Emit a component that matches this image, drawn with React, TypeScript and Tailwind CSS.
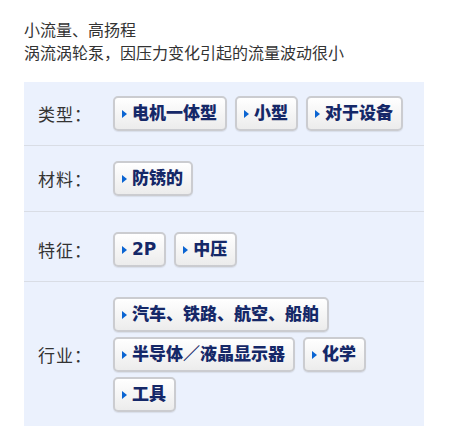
const rows = [
  {
    label: "类型：",
    pad: "pt-[14px] pb-[14px]",
    tags: ["电机一体型", "小型", "对于设备"],
  },
  { label: "材料：", pad: "pt-[15px] pb-[15px]", tags: ["防锈的"] },
  { label: "特征：", pad: "pt-[20px] pb-[14px]", tags: ["2P", "中压"] },
  {
    label: "行业：",
    pad: "pt-[15px] pb-[14px]",
    tags: ["汽车、铁路、航空、船舶", "半导体／液晶显示器", "化学", "工具"],
  },
]

function Tag({ children }: { children: string }) {
  return (
    <a
      href="#"
      className="flex h-[35px] items-center gap-[5px] rounded-[5px] border-2 border-[#cbccd0] bg-gradient-to-b from-white to-[#ececec] pl-[7px] pr-[8px] text-[17px] font-black text-[#152868] shadow-[0_1px_1px_rgba(0,0,0,0.08)] [font-family:'DejaVu_Sans','Noto_Sans_CJK_SC',sans-serif]"
    >
      <span className="h-0 w-0 border-y-[4.5px] border-l-[5px] border-y-transparent border-l-[#0a64d2]" />
      {children}
    </a>
  )
}

export default function App() {
  return (
    <div className="min-h-[438px] bg-white px-6 pt-[18px] text-[#333] [font-family:'Noto_Sans_CJK_SC',sans-serif]">
      <div className="text-[16px] leading-[23px]">
        <p>小流量、高扬程</p>
        <p>涡流涡轮泵，因压力变化引起的流量波动很小</p>
      </div>

      <div className="mt-[18px] w-[400px] bg-[#ebf1fd]">
        {rows.map((row, i) => (
          <div
            key={row.label}
            className={`flex items-center ${row.pad} ${
              i < rows.length - 1 ? "border-b border-[#d9dde5]" : ""
            }`}
          >
            <div className="w-[89px] shrink-0 pl-[14px] text-[17px] tracking-[1px]">
              {row.label}
            </div>
            <div className="flex flex-wrap gap-x-2 gap-y-[5px] pr-[14px]">
              {row.tags.map((tag) => (
                <Tag key={tag}>{tag}</Tag>
              ))}
            </div>
          </div>
        ))}
      </div>
    </div>
  )
}
